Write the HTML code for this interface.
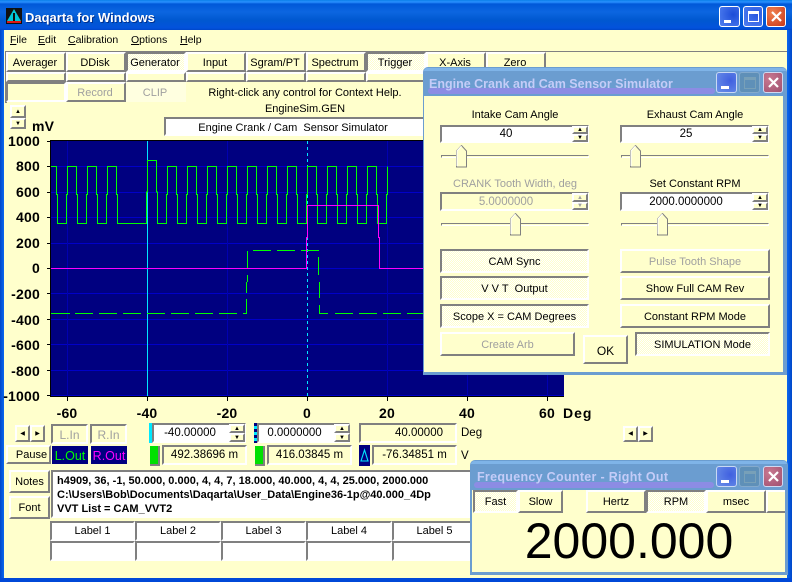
<!DOCTYPE html>
<html><head><meta charset="utf-8"><style>
html,body{margin:0;padding:0;background:#ffffcc}
#r{position:relative;width:792px;height:582px;overflow:hidden;background:#ffffcc;font:11px/1 "Liberation Sans",sans-serif;color:#000}
#r div{position:absolute;box-sizing:border-box}
.t{white-space:nowrap;text-align:center}
.b,.s,.f{display:flex;align-items:center;justify-content:center;white-space:nowrap;padding-top:2px}
.b{border:2px solid;border-color:#fff #808080 #808080 #fff;background:#ffffcc}
.s{border:2px solid;border-color:#808080 #fff #fff #808080;background:#ffffcc}
.d{background:repeating-conic-gradient(#fff 0 25%,#ffffcc 0 50%) 0 0/2px 2px}
.w{background:#fff}
.g{color:#a0a0a0}
.y{font:bold 14px/1 "Liberation Sans",sans-serif;letter-spacing:.2px;white-space:nowrap}
.cap{border:1px solid #fff;border-radius:3px}
.sp{border:2px solid;border-color:#fff #808080 #808080 #fff;background:#ffffcc;display:flex;align-items:center;justify-content:center;font-size:6px;line-height:6px}
.m{font-size:10.5px;top:35px}
.tb{padding-right:2px}
.p1{padding-top:1px}
u{text-decoration:underline}
</style></head><body><div id="r">
<!-- main frame -->
<div style="left:0;top:0;width:792px;height:30px;background:linear-gradient(180deg,#0a7fe8 0,#2a90ff 2px,#0058d8 4px,#0c66e0 12px,#0058d0 20px,#0252dc 28px,#0046c8 30px)"></div>
<div style="left:0;top:30px;width:4px;height:552px;background:linear-gradient(90deg,#0046c8,#0a68f0)"></div>
<div style="left:787px;top:30px;width:5px;height:552px;background:linear-gradient(90deg,#0a68f0,#0046c8)"></div>
<div style="left:0;top:578px;width:792px;height:4px;background:#0048d8"></div>
<svg style="position:absolute;left:6px;top:8px" width="16" height="16" viewBox="0 0 16 16"><rect width="16" height="16" fill="#101010"/><path d="M8 1L15 13H1Z" fill="#00c8d8"/><path d="M7 5h2v8H7z" fill="#101010"/><rect x="1" y="13" width="14" height="2" fill="#e01818"/></svg>
<div class="t" style="left:25px;top:11px;color:#fff;font:bold 13px/1 'Liberation Sans',sans-serif;text-shadow:1px 1px 0 #003090">Daqarta for Windows</div>
<!-- main caption -->
<div class="cap" style="left:719px;top:6px;width:21px;height:21px;background:radial-gradient(circle at 70% 40%,#1c4cd8,#5080f0)"><div style="left:4px;top:13px;width:7px;height:3px;background:#fff"></div></div>
<div class="cap" style="left:743px;top:6px;width:20px;height:21px;background:radial-gradient(circle at 70% 40%,#2a58e0,#5080f0)"><div style="left:4px;top:4px;width:11px;height:11px;border:1px solid #fff;border-top-width:3px"></div></div>
<div class="cap" style="left:766px;top:6px;width:20px;height:21px;background:radial-gradient(circle at 30% 30%,#f08050,#c83818)"><svg style="position:absolute;left:3px;top:3px" width="13" height="13"><path d="M2 2L11 11M11 2L2 11" stroke="#fff" stroke-width="2.2"/></svg></div>
<!-- menu -->
<div class="m" style="left:10px"><u>F</u>ile</div>
<div class="m" style="left:38px"><u>E</u>dit</div>
<div class="m" style="left:68px"><u>C</u>alibration</div>
<div class="m" style="left:131px"><u>O</u>ptions</div>
<div class="m" style="left:180px"><u>H</u>elp</div>
<div style="left:5px;top:51px;width:782px;height:1px;background:#808080"></div>
<div style="left:5px;top:51px;width:2px;height:52px;background:#808080"></div>
<!-- tabs -->
<div class="b tb" style="left:6px;top:52px;width:60px;height:20px">Averager</div>
<div class="b tb" style="left:66px;top:52px;width:60px;height:20px">DDisk</div>
<div class="s d tb" style="left:126px;top:52px;width:60px;height:20px">Generator</div>
<div class="b tb" style="left:186px;top:52px;width:60px;height:20px">Input</div>
<div class="b tb" style="left:246px;top:52px;width:60px;height:20px">Sgram/PT</div>
<div class="b tb" style="left:306px;top:52px;width:60px;height:20px">Spectrum</div>
<div class="s d tb" style="left:366px;top:52px;width:60px;height:20px">Trigger</div>
<div class="b tb" style="left:426px;top:52px;width:60px;height:20px">X-Axis</div>
<div class="b tb" style="left:486px;top:52px;width:60px;height:20px">Zero</div>
<div class="b" style="left:6px;top:72px;width:60px;height:10px"></div>
<div class="b" style="left:66px;top:72px;width:60px;height:10px"></div>
<div class="b" style="left:126px;top:72px;width:60px;height:10px"></div>
<div class="b" style="left:186px;top:72px;width:60px;height:10px"></div>
<div class="b" style="left:246px;top:72px;width:60px;height:10px"></div>
<div class="b" style="left:306px;top:72px;width:60px;height:10px"></div>
<div class="b" style="left:366px;top:72px;width:60px;height:10px"></div>
<div class="s" style="left:6px;top:82px;width:60px;height:20px"></div>
<div class="b g tb" style="left:66px;top:82px;width:60px;height:20px">Record</div>
<div class="f g tb" style="left:126px;top:82px;width:60px;height:20px;background:#ffffe0">CLIP</div>
<div class="t" style="left:165px;top:88px;width:280px">Right-click any control for Context Help.</div>
<div class="t" style="left:165px;top:104px;width:280px">EngineSim.GEN</div>
<div class="s w" style="left:164px;top:117px;width:262px;height:19px;padding-right:4px;padding-top:3px">Engine Crank / Cam&nbsp; Sensor Simulator</div>
<!-- y spinner -->
<div class="sp" style="left:10px;top:105px;width:16px;height:13px">▲</div>
<div class="sp" style="left:10px;top:118px;width:16px;height:11px">▼</div>
<div class="y" style="left:32px;top:119px">mV</div>
<!-- y labels -->
<div class="y" style="left:0;top:134px;width:40px;text-align:right">1000</div>
<div class="y" style="left:0;top:159px;width:40px;text-align:right">800</div>
<div class="y" style="left:0;top:185px;width:40px;text-align:right">600</div>
<div class="y" style="left:0;top:210px;width:40px;text-align:right">400</div>
<div class="y" style="left:0;top:236px;width:40px;text-align:right">200</div>
<div class="y" style="left:0;top:261px;width:40px;text-align:right">0</div>
<div class="y" style="left:0;top:287px;width:40px;text-align:right">-200</div>
<div class="y" style="left:0;top:313px;width:40px;text-align:right">-400</div>
<div class="y" style="left:0;top:338px;width:40px;text-align:right">-600</div>
<div class="y" style="left:0;top:364px;width:40px;text-align:right">-800</div>
<div class="y" style="left:0;top:389px;width:40px;text-align:right">-1000</div>
<!-- x labels -->
<div class="y" style="left:47px;top:406px;width:40px;text-align:center">-60</div>
<div class="y" style="left:127px;top:406px;width:40px;text-align:center">-40</div>
<div class="y" style="left:207px;top:406px;width:40px;text-align:center">-20</div>
<div class="y" style="left:287px;top:406px;width:40px;text-align:center">0</div>
<div class="y" style="left:367px;top:406px;width:40px;text-align:center">20</div>
<div class="y" style="left:447px;top:406px;width:40px;text-align:center">40</div>
<div class="y" style="left:527px;top:406px;width:40px;text-align:center">60</div>
<div class="y" style="left:563px;top:406px;letter-spacing:1px">Deg</div>
<!-- plot -->
<svg style="position:absolute;left:0;top:0" width="792" height="582" shape-rendering="crispEdges" fill="none">
<rect x="51" y="141" width="513" height="255" fill="#000080"/>
<path d="M51 140.5H564M50.5 140V397M50 396.5H564" stroke="#000"/>
<path d="M47 141.5h4M47 166.5h4M47 192.5h4M47 217.5h4M47 243.5h4M47 268.5h4M47 293.5h4M47 319.5h4M47 344.5h4M47 370.5h4M47 395.5h4" stroke="#000"/>
<path d="M67.5 397v4M147.5 397v4M227.5 397v4M307.5 397v4M387.5 397v4M467.5 397v4M547.5 397v4" stroke="#000"/>
<path d="M51 166.5H564M51 192.5H564M51 217.5H564M51 243.5H564M51 293.5H564M51 319.5H564M51 344.5H564M51 370.5H564M51 395.5H564M51 268.5H564" stroke="#0000c8"/>
<path d="M67.5 141V396M227.5 141V396M387.5 141V396M467.5 141V396M547.5 141V396" stroke="#0000b0"/>
<path d="M147.5 141V396" stroke="#00e8ff"/>
<path d="M307.5 141V396" stroke="#00e8ff" stroke-dasharray="3 3"/>
<path d="M51 166.5H56.5V194.5H57.5V223.5H66.5V194.5H67.5V166.5 h9v28h1v29h9v-29h1v-28 h9v28h1v29h9v-29h1v-28 h9v28h1v29H146.5V192H147.5V160.5H156.5V192H157.5V223.5H166.5V194.5H167.5V166.5 h9v28h1v29h9v-29h1v-28 h9v28h1v29h9v-29h1v-28 h9v28h1v29h9v-29h1v-28 h9v28h1v29h9v-29h1v-28 h9v28h1v29h9v-29h1v-28 h9v28h1v29h9v-29h1v-28 h9v28h1v29h9v-29h1v-28 h9v28h1v29h9v-29h1v-28 h9v28h1v29h9v-29h1v-28 h9v28h1v29h9v-29h1v-28 h9v28h1v29h9v-29h1v-28" stroke="#00ff00"/>
<path d="M253 250.5h18M277 250.5h18M301 250.5h18M247.5 251v17M247.5 275v7M246.5 282v11M246.5 299v14M318.5 257v18M319.5 282v16M319.5 305v8M306.5 241v20M306.5 196v9" stroke="#00ff00"/>
<path d="M51 313.5h19M75 313.5h18M99 313.5h18M123 313.5h18M147 313.5h18M171 313.5h18M195 313.5h18M219 313.5h18M243 313.5h4M319 313.5h9M335 313.5h18M359 313.5h18M383 313.5h18M407 313.5h18M431 313.5h18M455 313.5h18M479 313.5h18M503 313.5h18M527 313.5h18M551 313.5h13" stroke="#00ff00"/>
<path d="M51 268.5H306.5V237.5H307.5V205.5H378.5V237.5H379.5V268.5H564" stroke="#ff00ff"/>
</svg>
<!-- lower controls -->
<div class="sp" style="left:15px;top:425px;width:15px;height:17px">◀</div>
<div class="sp" style="left:30px;top:425px;width:15px;height:17px">▶</div>
<div class="s g" style="left:51px;top:424px;width:37px;height:20px;font-size:12px">L.In</div>
<div class="s g" style="left:90px;top:424px;width:37px;height:20px;font-size:12px">R.In</div>
<div style="left:149px;top:423px;width:3px;height:20px;background:#00e8ff"></div>
<div class="s w" style="left:152px;top:423px;width:94px;height:20px;padding-right:18px;font-size:11.5px">-40.00000</div>
<div class="sp" style="left:229px;top:424px;width:16px;height:9px">▲</div>
<div class="sp" style="left:229px;top:433px;width:16px;height:9px">▼</div>
<div style="left:254px;top:423px;width:3px;height:20px;background:repeating-linear-gradient(180deg,#000080 0 3px,#00e8ff 3px 6px)"></div>
<div class="s w" style="left:257px;top:423px;width:93px;height:20px;padding-right:18px;font-size:11.5px">0.0000000</div>
<div class="sp" style="left:334px;top:424px;width:16px;height:9px">▲</div>
<div class="sp" style="left:334px;top:433px;width:16px;height:9px">▼</div>
<div class="s" style="left:359px;top:423px;width:98px;height:20px;font-size:11.5px;padding-left:22px">40.00000</div>
<div style="left:461px;top:428px;font-size:11.5px">Deg</div>
<div class="b" style="left:6px;top:445px;width:45px;height:19px;padding-left:6px">Pause</div>
<div class="f" style="left:52px;top:446px;width:36px;height:18px;background:#000080;color:#00ff00;font-size:12.5px">L.Out</div>
<div class="f" style="left:91px;top:446px;width:36px;height:18px;background:#000080;color:#ff00ff;font-size:12.5px">R.Out</div>
<div style="left:150px;top:446px;width:10px;height:20px;background:#00e000;border-right:2px solid #808080;border-bottom:2px solid #808080"></div>
<div class="s" style="left:162px;top:445px;width:85px;height:20px;font-size:11.5px">492.38696 m</div>
<div style="left:255px;top:446px;width:10px;height:20px;background:#00e000;border-right:2px solid #808080;border-bottom:2px solid #808080"></div>
<div class="s" style="left:267px;top:445px;width:85px;height:20px;font-size:11.5px">416.03845 m</div>
<div style="left:359px;top:445px;width:11px;height:21px;background:#000080"><svg style="position:absolute;left:0;top:0" width="11" height="21" fill="none"><path d="M5.5 5L2 16H9Z" stroke="#00e8ff" stroke-width="1.1"/></svg></div>
<div class="s" style="left:372px;top:445px;width:85px;height:20px;font-size:11.5px">-76.34851 m</div>
<div style="left:461px;top:451px;font-size:11.5px">V</div>
<div class="sp" style="left:623px;top:426px;width:15px;height:16px">◀</div>
<div class="sp" style="left:638px;top:426px;width:15px;height:16px">▶</div>
<!-- notes -->
<div class="b p1" style="left:9px;top:470px;width:41px;height:23px">Notes</div>
<div class="b p1" style="left:9px;top:496px;width:41px;height:23px">Font</div>
<div class="s w" style="left:51px;top:470px;width:430px;height:48px"></div>
<div style="left:57px;top:474px;font:bold 11px/14px 'Liberation Sans',sans-serif;white-space:nowrap">h4909, 36, -1, 50.000, 0.000, 4, 4, 7, 18.000, 40.000, 4, 4, 25.000, 2000.000<br>C:\Users\Bob\Documents\Daqarta\User_Data\Engine36-1p@40.000_4Dp<br>VVT List = CAM_VVT2</div>
<div class="s w p1" style="left:50px;top:521px;width:85px;height:20px">Label 1</div>
<div class="s w p1" style="left:135px;top:521px;width:86px;height:20px">Label 2</div>
<div class="s w p1" style="left:221px;top:521px;width:85px;height:20px">Label 3</div>
<div class="s w p1" style="left:306px;top:521px;width:86px;height:20px">Label 4</div>
<div class="s w p1" style="left:392px;top:521px;width:85px;height:20px">Label 5</div>
<div class="s w" style="left:50px;top:541px;width:85px;height:20px"></div>
<div class="s w" style="left:135px;top:541px;width:86px;height:20px"></div>
<div class="s w" style="left:221px;top:541px;width:85px;height:20px"></div>
<div class="s w" style="left:306px;top:541px;width:86px;height:20px"></div>
<div class="s w" style="left:392px;top:541px;width:85px;height:20px"></div>
<!-- dialog -->
<div style="left:423px;top:67px;width:364px;height:308px;background:#6b9dd0;border-radius:5px 5px 0 0"></div>
<div style="left:424px;top:68px;width:362px;height:3px;background:#7fb4e8;border-radius:4px 4px 0 0"></div>
<div style="left:428px;top:88px;width:287px;height:6px;background:#8c8ce4;border-radius:3px"></div>
<div style="left:429px;top:78px;color:#c4ccf8;font:bold 12.5px/1 'Liberation Sans',sans-serif;white-space:nowrap">Engine Crank and Cam Sensor Simulator</div>
<div class="cap" style="left:716px;top:72px;width:21px;height:21px;background:radial-gradient(circle at 70% 40%,#4060e0,#6a90e8);border-color:#c8d8f4"><div style="left:4px;top:13px;width:8px;height:3px;background:#fff"></div></div>
<div class="cap" style="left:739px;top:72px;width:21px;height:21px;background:#5f90b8;border-color:#84aacc"><div style="left:4px;top:4px;width:12px;height:12px;border:1px solid #78a0b8;border-top-width:3px"></div></div>
<div class="cap" style="left:763px;top:72px;width:20px;height:21px;background:radial-gradient(circle at 30% 30%,#c87890,#a05070);border-color:#d0d8f0"><svg style="position:absolute;left:3px;top:3px" width="13" height="13"><path d="M2 2L11 11M11 2L2 11" stroke="#fff" stroke-width="2.2"/></svg></div>
<div style="left:424px;top:96px;width:359px;height:276px;background:#ffffcc"></div>
<div class="t" style="left:440px;top:110px;width:150px">Intake Cam Angle</div>
<div class="t" style="left:620px;top:110px;width:150px">Exhaust Cam Angle</div>
<div class="s w" style="left:440px;top:125px;width:149px;height:18px;padding-right:17px;font-size:11.5px">40</div>
<div class="sp" style="left:572px;top:126px;width:16px;height:8px">▲</div><div class="sp" style="left:572px;top:134px;width:16px;height:8px">▼</div>
<div class="s w" style="left:620px;top:125px;width:149px;height:18px;padding-right:17px;font-size:11.5px">25</div>
<div class="sp" style="left:752px;top:126px;width:16px;height:8px">▲</div><div class="sp" style="left:752px;top:134px;width:16px;height:8px">▼</div>
<!-- sliders -->
<div class="s" style="left:441px;top:155px;width:148px;height:3px;border-width:1px;padding:0"></div>
<div class="s" style="left:621px;top:155px;width:148px;height:3px;border-width:1px;padding:0"></div>
<div class="s" style="left:441px;top:223px;width:148px;height:3px;border-width:1px;padding:0"></div>
<div class="s" style="left:621px;top:223px;width:148px;height:3px;border-width:1px;padding:0"></div>
<svg style="position:absolute;left:456px;top:145px" width="12" height="23"><path d="M.5 6L5.5 .5 10.5 6V22H.5Z" fill="#ffffcc" stroke="#808080"/><path d="M1 21V6L5.5 1" stroke="#fff" fill="none"/></svg>
<svg style="position:absolute;left:630px;top:145px" width="12" height="23"><path d="M.5 6L5.5 .5 10.5 6V22H.5Z" fill="#ffffcc" stroke="#808080"/><path d="M1 21V6L5.5 1" stroke="#fff" fill="none"/></svg>
<svg style="position:absolute;left:510px;top:213px" width="12" height="23"><path d="M.5 6L5.5 .5 10.5 6V22H.5Z" fill="#ffffcc" stroke="#808080"/><path d="M1 21V6L5.5 1" stroke="#fff" fill="none"/></svg>
<svg style="position:absolute;left:657px;top:213px" width="12" height="23"><path d="M.5 6L5.5 .5 10.5 6V22H.5Z" fill="#ffffcc" stroke="#808080"/><path d="M1 21V6L5.5 1" stroke="#fff" fill="none"/></svg>
<div class="t g" style="left:440px;top:179px;width:150px">CRANK Tooth Width, deg</div>
<div class="t" style="left:620px;top:179px;width:150px">Set Constant RPM</div>
<div class="s g" style="left:440px;top:192px;width:149px;height:19px;padding-right:17px;font-size:11.5px">5.0000000</div>
<div class="sp g" style="left:572px;top:193px;width:16px;height:9px">▲</div><div class="sp g" style="left:572px;top:202px;width:16px;height:8px">▼</div>
<div class="s w" style="left:620px;top:192px;width:149px;height:19px;padding-right:17px;font-size:11.5px">2000.0000000</div>
<div class="sp" style="left:752px;top:193px;width:16px;height:9px">▲</div><div class="sp" style="left:752px;top:202px;width:16px;height:8px">▼</div>
<div class="s d" style="left:440px;top:249px;width:149px;height:24px">CAM Sync</div>
<div class="s d" style="left:440px;top:276px;width:149px;height:24px">V V T&nbsp; Output</div>
<div class="s d" style="left:440px;top:304px;width:149px;height:24px">Scope X = CAM Degrees</div>
<div class="b g" style="left:620px;top:249px;width:150px;height:24px">Pulse Tooth Shape</div>
<div class="b" style="left:620px;top:276px;width:150px;height:24px">Show Full CAM Rev</div>
<div class="b" style="left:620px;top:304px;width:150px;height:24px">Constant RPM Mode</div>
<div class="b g" style="left:440px;top:332px;width:135px;height:24px">Create Arb</div>
<div class="b" style="left:583px;top:335px;width:45px;height:29px;font-size:12px">OK</div>
<div class="s d" style="left:635px;top:332px;width:135px;height:24px">SIMULATION Mode</div>
<!-- frequency counter -->
<div style="left:470px;top:460px;width:318px;height:115px;background:#6b9dd0;border-radius:5px 5px 0 0"></div>
<div style="left:471px;top:461px;width:316px;height:3px;background:#7fb4e8;border-radius:4px 4px 0 0"></div>
<div style="left:474px;top:482px;width:240px;height:6px;background:#8c8ce4;border-radius:3px"></div>
<div style="left:477px;top:471px;color:#c4ccf8;font:bold 12.5px/1 'Liberation Sans',sans-serif;letter-spacing:.3px;white-space:nowrap">Frequency Counter - Right Out</div>
<div class="cap" style="left:716px;top:466px;width:21px;height:21px;background:radial-gradient(circle at 70% 40%,#4060e0,#6a90e8);border-color:#c8d8f4"><div style="left:4px;top:13px;width:8px;height:3px;background:#fff"></div></div>
<div class="cap" style="left:739px;top:466px;width:21px;height:21px;background:#5f90b8;border-color:#84aacc"><div style="left:4px;top:4px;width:12px;height:12px;border:1px solid #78a0b8;border-top-width:3px"></div></div>
<div class="cap" style="left:763px;top:466px;width:20px;height:21px;background:radial-gradient(circle at 30% 30%,#c87890,#a05070);border-color:#d0d8f0"><svg style="position:absolute;left:3px;top:3px" width="13" height="13"><path d="M2 2L11 11M11 2L2 11" stroke="#fff" stroke-width="2.2"/></svg></div>
<div style="left:472px;top:490px;width:313px;height:82px;background:#ffffcc"></div>
<div class="s d p1" style="left:473px;top:490px;width:45px;height:23px">Fast</div>
<div class="b p1" style="left:518px;top:490px;width:45px;height:23px">Slow</div>
<div class="b p1" style="left:586px;top:490px;width:60px;height:23px">Hertz</div>
<div class="s d p1" style="left:646px;top:490px;width:60px;height:23px">RPM</div>
<div class="b p1" style="left:706px;top:490px;width:60px;height:23px">msec</div>
<div class="b p1" style="left:766px;top:490px;width:19px;height:23px;border-right:0"></div>
<div class="t" style="left:473px;top:516px;width:312px;font-size:50px;line-height:50px">2000.000</div>
</div></body></html>
